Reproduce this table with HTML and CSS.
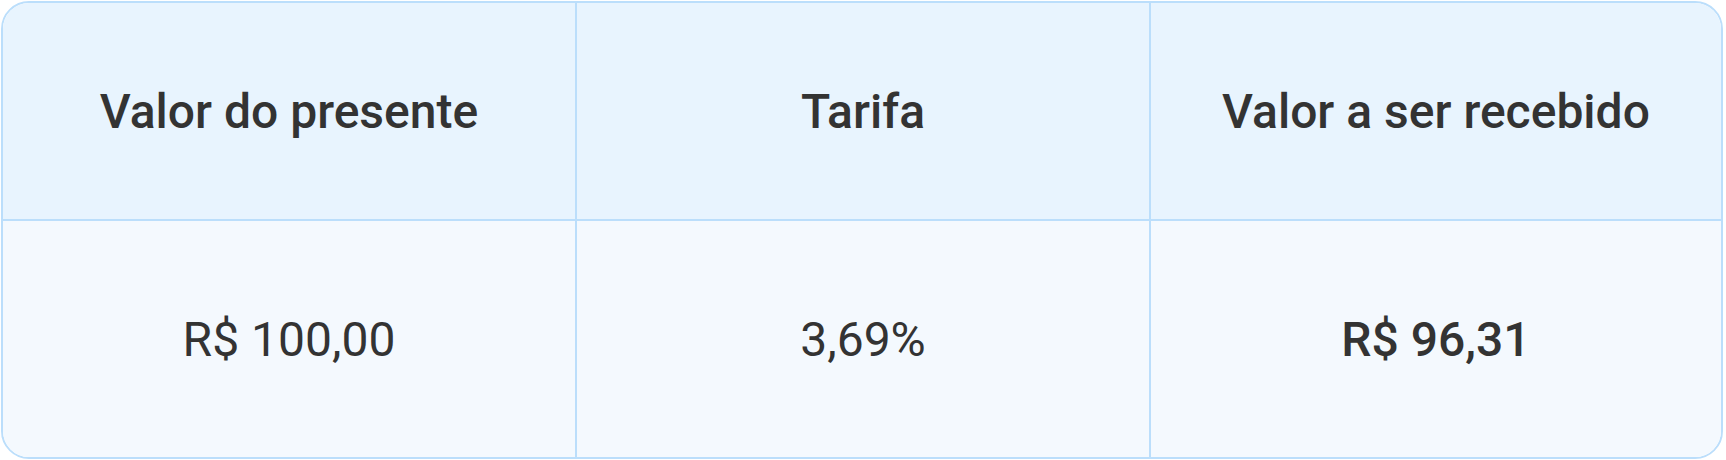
FILE: index.html
```html
<!DOCTYPE html>
<html lang="pt-BR">
<head>
    <meta charset="UTF-8">
    <meta name="viewport" content="width=device-width, initial-scale=1.0">
    <title>Tarifa do presente</title>
    <link rel="stylesheet" href="styles.css">
</head>
<body>
    <div class="fee-table">
        <!-- Header -->
        <div class="cell head">Valor do presente</div>
        <div class="cell head">Tarifa</div>
        <div class="cell head last">Valor a ser recebido</div>

        <!-- Values -->
        <div class="cell value">R$ 100,00</div>
        <div class="cell value">3,69%</div>
        <div class="cell value last total">R$ 96,31</div>
    </div>
</body>
</html>
```

FILE: styles.css
```css
body {
    font-family: Roboto, "Noto Sans", sans-serif;
    margin: 1px;
    background-color: #fff;
    color: #333;
}
.fee-table {
    display: grid;
    grid-template-columns: 574px 574px 570px;
    grid-template-rows: 218px 236px;
    width: 1722px;
    height: 458px;
    border: 2px solid #bbdefb;
    border-radius: 28px;
    overflow: hidden;
    box-sizing: border-box;
}
.cell {
    display: flex;
    align-items: center;
    justify-content: center;
    font-size: 48px;
    border-right: 2px solid #bbdefb;
}
.cell.last {
    border-right: none;
}
.head {
    background-color: #e8f4fe;
    font-weight: 500;
    border-bottom: 2px solid #bbdefb;
}
.value {
    background-color: #f4f9fe;
    font-weight: 400;
}
.total {
    font-weight: 500;
}
```
